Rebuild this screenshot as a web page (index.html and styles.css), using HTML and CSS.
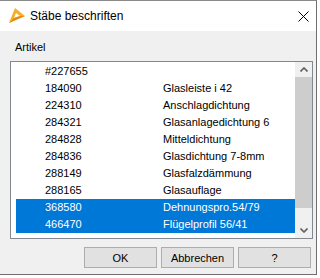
FILE: index.html
```html
<!DOCTYPE html>
<html lang="de">
<head>
    <meta charset="UTF-8">
    <title>Stäbe beschriften</title>
    <link rel="stylesheet" href="styles.css">
</head>
<body>
    <div class="window">
        <div class="titlebar">
            <svg class="app-icon" width="16" height="16" viewBox="0 0 16 16">
                <polygon points="0,15 6,0 16,8" fill="#f5b02a"/>
                <polygon points="5,10 7,5 11,8" fill="#ffffff"/>
                <polygon points="0,15 5,10 11,8 16,8" fill="#e58c10"/>
            </svg>
            <span class="title">Stäbe beschriften</span>
            <svg class="close" width="11" height="11" viewBox="0 0 11 11">
                <path d="M0.5 0.5 L10.5 10.5 M10.5 0.5 L0.5 10.5" stroke="#000" stroke-width="1"/>
            </svg>
        </div>

        <div class="content">
            <div class="label">Artikel</div>

            <div class="listbox">
                <div class="rows">
                    <div class="row"><span class="num">#227655</span><span></span></div>
                    <div class="row"><span class="num">184090</span><span>Glasleiste i 42</span></div>
                    <div class="row"><span class="num">224310</span><span>Anschlagdichtung</span></div>
                    <div class="row"><span class="num">284321</span><span>Glasanlagedichtung 6</span></div>
                    <div class="row"><span class="num">284828</span><span>Mitteldichtung</span></div>
                    <div class="row"><span class="num">284836</span><span>Glasdichtung 7-8mm</span></div>
                    <div class="row"><span class="num">288149</span><span>Glasfalzdämmung</span></div>
                    <div class="row"><span class="num">288165</span><span>Glasauflage</span></div>
                    <div class="row selected"><span class="num">368580</span><span>Dehnungspro.54/79</span></div>
                    <div class="row selected"><span class="num">466470</span><span>Flügelprofil 56/41</span></div>
                </div>
                <div class="scrollbar">
                    <div class="arrow">
                        <svg width="8" height="5" viewBox="0 0 8 5"><path d="M0.5 4.5 L4 1 L7.5 4.5" fill="none" stroke="#606060" stroke-width="1.6"/></svg>
                    </div>
                    <div class="track"><div class="thumb"></div></div>
                    <div class="arrow">
                        <svg width="8" height="5" viewBox="0 0 8 5"><path d="M0.5 0.5 L4 4 L7.5 0.5" fill="none" stroke="#606060" stroke-width="1.6"/></svg>
                    </div>
                </div>
            </div>

            <div class="buttons">
                <button>OK</button>
                <button>Abbrechen</button>
                <button>?</button>
            </div>
        </div>
    </div>
</body>
</html>
```

FILE: styles.css
```css
body {
    margin: 0;
    background: #ffffff;
    font-family: "Liberation Sans", Arial, sans-serif;
    font-size: 11px;
    color: #000;
}
.window {
    width: 316px;
    height: 273px;
    border-top: 1px solid #8a8a8a;
    border-right: 1px solid #6f6f6f;
    border-bottom: 1px solid #6f6f6f;
    display: flex;
    flex-direction: column;
    background: #f0f0f0;
}
.titlebar {
    height: 30px;
    background: #ffffff;
    display: flex;
    align-items: center;
}
.app-icon {
    margin-left: 9px;
    margin-right: 5px;
}
.title {
    font-size: 12px;
    flex: 1;
}
.close {
    margin-right: 7px;
}
.content {
    flex: 1;
    padding: 10px 5px 0 10px;
}
.label {
    height: 13px;
    line-height: 13px;
    padding-left: 5px;
    margin-bottom: 7px;
}
.listbox {
    height: 176px;
    width: 301px;
    border: 1px solid #828790;
    background: #ffffff;
    display: flex;
    overflow: hidden;
}
.rows {
    flex: 1;
    padding: 1px 0 0 5px;
}
.row {
    display: grid;
    grid-template-columns: 147px 109px;
    height: 17px;
    line-height: 17px;
    white-space: nowrap;
}
.row .num {
    padding-left: 29px;
}
.row.selected {
    background: #0078d7;
    color: #ffffff;
}
.scrollbar {
    width: 17px;
    background: #f0f0f0;
    display: flex;
    flex-direction: column;
}
.arrow {
    height: 15px;
    display: flex;
    align-items: center;
    justify-content: center;
}
.track {
    flex: 1;
}
.thumb {
    height: 131px;
    background: #cdcdcd;
}
.buttons {
    display: flex;
    justify-content: flex-end;
    gap: 4px;
    margin-top: 8px;
}
.buttons button {
    width: 73px;
    height: 21px;
    background: #e1e1e1;
    border: 1px solid #adadad;
    font-family: "Liberation Sans", Arial, sans-serif;
    font-size: 11px;
    color: #000;
    padding: 0;
}
```
